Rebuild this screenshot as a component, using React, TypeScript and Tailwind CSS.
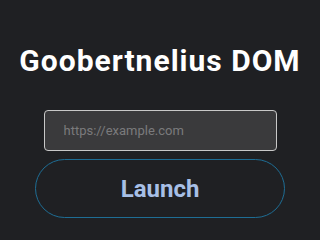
export default function App() {
  return (
    <div
      className="flex h-[240px] w-[320px] flex-col items-center bg-[#1f2023] pt-[43px]"
      style={{ fontFamily: 'Roboto, "Liberation Sans", sans-serif' }}
    >
      <h1 className="text-[30px] font-bold leading-[36px] tracking-[1px] text-white">Goobertnelius DOM</h1>
      <input
        type="text"
        placeholder="https://example.com"
        className="mt-[31px] h-[41px] w-[233px] rounded-[4px] border border-[#c8c8c8] bg-[#3a3a3c] px-[19px] text-[13px] text-white outline-none placeholder:text-[#7a7a7c]"
      />
      <button className="mt-[8px] h-[59px] w-[250px] rounded-full border border-[#1e6d94] bg-transparent text-[24px] font-bold text-[#a7bfe6]">
        Launch
      </button>
    </div>
  );
}
